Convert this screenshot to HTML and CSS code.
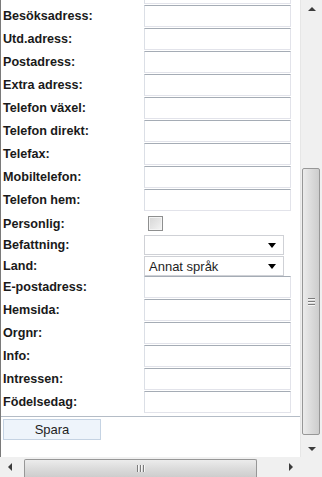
FILE: index.html
```html
<!DOCTYPE html>
<html lang="sv">
<head>
    <meta charset="UTF-8">
    <title>Kontakt</title>
    <link rel="stylesheet" href="styles.css">
</head>
<body>
    <div class="window">
        <div class="viewport">
            <div class="content">
                <form class="form">
                    <div class="row"><span class="label link">Företag</span><input type="text" class="field"></div>
                    <div class="row"><span class="label">Besöksadress:</span><input type="text" class="field"></div>
                    <div class="row"><span class="label">Utd.adress:</span><input type="text" class="field"></div>
                    <div class="row"><span class="label">Postadress:</span><input type="text" class="field"></div>
                    <div class="row"><span class="label">Extra adress:</span><input type="text" class="field"></div>
                    <div class="row"><span class="label">Telefon växel:</span><input type="text" class="field"></div>
                    <div class="row"><span class="label">Telefon direkt:</span><input type="text" class="field"></div>
                    <div class="row"><span class="label">Telefax:</span><input type="text" class="field"></div>
                    <div class="row"><span class="label">Mobiltelefon:</span><input type="text" class="field"></div>
                    <div class="row"><span class="label">Telefon hem:</span><input type="text" class="field"></div>
                    <div class="row row-check"><span class="label">Personlig:</span><span class="checkbox"></span></div>
                    <div class="row row-select"><span class="label">Befattning:</span>
                        <div class="select"><span class="select-text"></span><span class="select-arrow"></span></div>
                    </div>
                    <div class="row row-select last"><span class="label">Land:</span>
                        <div class="select"><span class="select-text">Annat språk</span><span class="select-arrow"></span></div>
                    </div>
                    <div class="row"><span class="label">E-postadress:</span><input type="text" class="field"></div>
                    <div class="row"><span class="label">Hemsida:</span><input type="text" class="field"></div>
                    <div class="row"><span class="label">Orgnr:</span><input type="text" class="field"></div>
                    <div class="row"><span class="label">Info:</span><input type="text" class="field"></div>
                    <div class="row"><span class="label">Intressen:</span><input type="text" class="field"></div>
                    <div class="row"><span class="label">Födelsedag:</span><input type="text" class="field"></div>
                    <div class="footer">
                        <button type="button" class="save">Spara</button>
                    </div>
                </form>
            </div>
            <div class="vscroll">
                <div class="sb-btn"><span class="arrow-up"></span></div>
                <div class="vtrack">
                    <div class="vthumb">
                        <span class="grip-line"></span>
                        <span class="grip-line"></span>
                        <span class="grip-line"></span>
                    </div>
                </div>
                <div class="sb-btn"><span class="arrow-down"></span></div>
            </div>
        </div>
        <div class="hscroll">
            <div class="sb-btn-h"><span class="arrow-left"></span></div>
            <div class="htrack">
                <div class="hthumb">
                    <span class="grip-vline"></span>
                    <span class="grip-vline"></span>
                    <span class="grip-vline"></span>
                </div>
            </div>
            <div class="sb-btn-h"><span class="arrow-right"></span></div>
            <div class="corner"></div>
        </div>
    </div>
</body>
</html>
```

FILE: styles.css
```css
body {
    margin: 0;
    font-family: "Liberation Sans", Arial, sans-serif;
    color: #1a1a1a;
    background-color: #fff;
    overflow: hidden;
}

.window {
    width: 322px;
    height: 477px;
    display: flex;
    flex-direction: column;
    overflow: hidden;
}

.viewport {
    height: 457px;
    display: flex;
    overflow: hidden;
}

.content {
    flex: 1;
    border-left: 1px solid #7a7a7a;
    background-color: #fff;
    overflow: hidden;
}

.form {
    margin-top: -18px;
}

.row {
    display: flex;
    align-items: flex-start;
    height: 23px;
}

.label {
    width: 141px;
    padding-left: 2px;
    font-size: 12.6px;
    font-weight: bold;
    line-height: 23px;
    color: #1a1a1a;
    white-space: nowrap;
}

.label.link {
    color: #1a3cc8;
}

.field {
    box-sizing: border-box;
    width: 147px;
    height: 22px;
    margin: 0;
    padding: 0 3px;
    border: 1px solid #e2e3ea;
    border-top-color: #a5acb5;
    border-left-color: #dbdfe6;
    background-color: #fff;
    font-family: inherit;
    font-size: 13px;
}

.row-check {
    height: 23px;
}

.row-check .label {
    line-height: 24px;
}

.checkbox {
    box-sizing: border-box;
    width: 15px;
    height: 15px;
    margin: 4px 0 0 4px;
    border: 1px solid #8e8f8f;
    background: linear-gradient(135deg, #d5d5d5, #f4f4f4);
    box-shadow: inset 0 0 0 1px #f4f4f4;
}

.row-select {
    height: 21px;
}

.row-select.last {
    height: 20px;
}

.row-select .label {
    line-height: 20px;
}

.select {
    box-sizing: border-box;
    width: 140px;
    height: 20px;
    display: flex;
    align-items: center;
    justify-content: space-between;
    border: 1px solid #cfd1d6;
    background-color: #fff;
    padding: 0 7px 0 4px;
}

.select-text {
    font-size: 13px;
    color: #1e1e1e;
}

.select-arrow {
    width: 0;
    height: 0;
    border-left: 4.5px solid transparent;
    border-right: 4.5px solid transparent;
    border-top: 5px solid #000;
}

.footer {
    margin-top: 2px;
    width: 300px;
    border-top: 1px solid #b4bcc6;
    padding: 2px 0 0 2px;
}

.save {
    box-sizing: border-box;
    width: 98px;
    height: 21px;
    padding: 0;
    border: 1px solid #c5d3e3;
    background-color: #eef4fb;
    font-family: inherit;
    font-size: 13px;
    color: #1e1e1e;
}

/* scrollbars */

.vscroll {
    width: 21px;
    display: flex;
    flex-direction: column;
    background-color: #f0f0f0;
    border-left: 1px solid #e6e6e6;
}

.sb-btn {
    height: 17px;
    display: flex;
    align-items: center;
    justify-content: center;
}

.arrow-up {
    width: 0;
    height: 0;
    border-left: 4px solid transparent;
    border-right: 4px solid transparent;
    border-bottom: 4px solid #3c3c3c;
}

.arrow-down {
    width: 0;
    height: 0;
    border-left: 4px solid transparent;
    border-right: 4px solid transparent;
    border-top: 4px solid #3c3c3c;
}

.vtrack {
    flex: 1;
    padding-top: 151px;
}

.vthumb {
    box-sizing: border-box;
    width: 18px;
    height: 267px;
    margin-left: 1px;
    border: 1px solid #979797;
    border-radius: 2px;
    background: linear-gradient(90deg, #ececec, #dadada 55%, #cdcdcd);
    display: flex;
    flex-direction: column;
    align-items: center;
    justify-content: center;
    gap: 2px;
}

.grip-line {
    width: 7px;
    height: 1px;
    background-color: #7c7c7c;
    box-shadow: 0 1px 0 #f6f6f6;
}

.hscroll {
    height: 20px;
    display: flex;
    background-color: #f0f0f0;
}

.sb-btn-h {
    width: 20px;
    display: flex;
    align-items: center;
    justify-content: center;
}

.arrow-left {
    width: 0;
    height: 0;
    border-top: 4px solid transparent;
    border-bottom: 4px solid transparent;
    border-right: 4px solid #3c3c3c;
}

.arrow-right {
    width: 0;
    height: 0;
    border-top: 4px solid transparent;
    border-bottom: 4px solid transparent;
    border-left: 4px solid #3c3c3c;
}

.htrack {
    flex: 1;
    padding: 2px 0 0 4px;
}

.hthumb {
    box-sizing: border-box;
    width: 233px;
    height: 18px;
    border: 1px solid #979797;
    border-bottom: none;
    border-radius: 2px 2px 0 0;
    background: linear-gradient(180deg, #ececec, #dadada 55%, #cdcdcd);
    display: flex;
    align-items: center;
    justify-content: center;
    gap: 2px;
}

.grip-vline {
    width: 1px;
    height: 7px;
    background-color: #7c7c7c;
    box-shadow: 1px 0 0 #f6f6f6;
}

.corner {
    width: 21px;
    background-color: #f0f0f0;
}
```
